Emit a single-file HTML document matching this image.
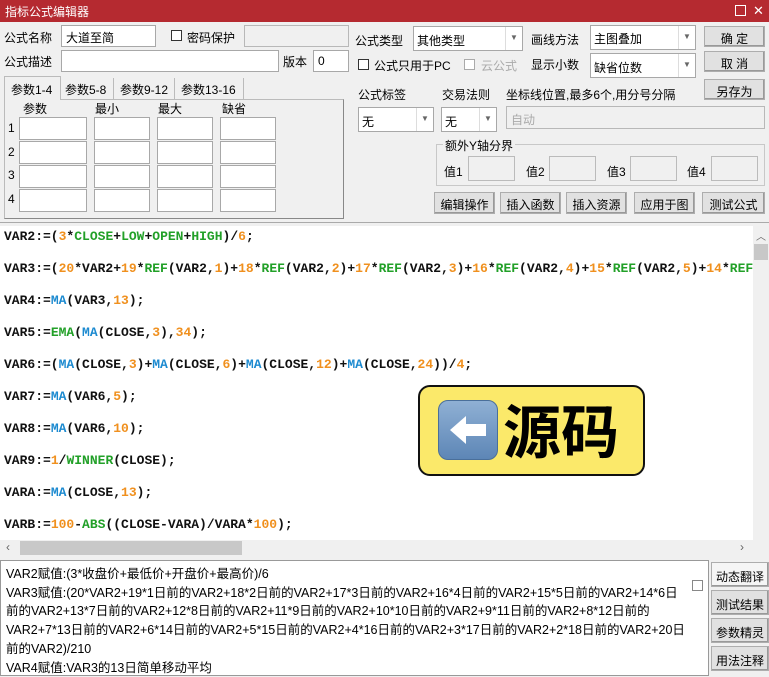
<!DOCTYPE html>
<html><head><meta charset="utf-8"><style>
*{margin:0;padding:0;box-sizing:border-box}
body{width:769px;height:676px;background:#f0f0f0;font-family:"Liberation Sans","Noto Sans CJK SC",sans-serif;font-size:12px;color:#000;position:relative;overflow:hidden}
.a{position:absolute;white-space:nowrap}
.in{position:absolute;background:#fff;border:1px solid #a8a8a8}
.dis{position:absolute;background:#f0f0f0;border:1px solid #b8b8b8}
.btn{position:absolute;background:#e1e1e1;border:1px solid #adadad;text-align:center;font-size:12px;box-shadow:inset -1px -1px 0 #999}
.cb{position:absolute;width:11px;height:11px;border:1px solid #333;background:#fff}
.dd{position:absolute;background:#fff;border:1px solid #a8a8a8}
.dd i{position:absolute;right:0;top:0;bottom:0;width:17px;border-left:1px solid #ddd;font-style:normal;font-size:8px;color:#666;text-align:center}
.code{position:absolute;left:0;top:226px;width:753px;height:314px;background:#fff;font-family:"Liberation Mono",monospace;font-weight:bold;font-size:13px;overflow:hidden}
.code div{position:absolute;left:4px;white-space:pre;color:#111}
.n{color:#f0901e}.g{color:#22a028}.b{color:#1c8ad0}
</style></head><body>
<div class="a" style="left:0;top:0;width:769px;height:22px;background:#b52a30;color:#fff;padding:3px 0 0 5px;font-size:12px">指标公式编辑器</div>
<div class="a" style="left:735px;top:5px;width:11px;height:11px;border:1px solid #fff"></div>
<div class="a" style="left:753px;top:3px;color:#fff;font-size:13px">✕</div>

<div class="a" style="left:4px;top:29px">公式名称</div>
<div class="in" style="left:61px;top:25px;width:95px;height:22px;padding:3px 4px">大道至简</div>
<div class="cb" style="left:171px;top:30px"></div>
<div class="a" style="left:187px;top:29px">密码保护</div>
<div class="dis" style="left:244px;top:25px;width:105px;height:22px"></div>
<div class="a" style="left:4px;top:53px">公式描述</div>
<div class="in" style="left:61px;top:50px;width:218px;height:22px"></div>
<div class="a" style="left:283px;top:53px">版本</div>
<div class="in" style="left:313px;top:50px;width:36px;height:22px;padding:3px 4px">0</div>

<div class="a" style="left:355px;top:32px">公式类型</div>
<div class="dd" style="left:413px;top:26px;width:110px;height:25px;padding:5px 3px">其他类型<i style="padding-top:6px">▼</i></div>
<div class="a" style="left:531px;top:31px">画线方法</div>
<div class="dd" style="left:590px;top:25px;width:106px;height:25px;padding:4px 3px">主图叠加<i style="padding-top:6px">▼</i></div>
<div class="btn" style="left:704px;top:26px;width:61px;height:21px;padding-top:3px">确 定</div>
<div class="cb" style="left:358px;top:59px"></div>
<div class="a" style="left:374px;top:57px">公式只用于PC</div>
<div class="cb" style="left:464px;top:59px;border-color:#aaa"></div>
<div class="a" style="left:481px;top:57px;color:#aaa">云公式</div>
<div class="a" style="left:531px;top:56px">显示小数</div>
<div class="dd" style="left:590px;top:53px;width:106px;height:25px;padding:5px 3px">缺省位数<i style="padding-top:6px">▼</i></div>
<div class="btn" style="left:704px;top:51px;width:61px;height:21px;padding-top:3px">取 消</div>
<div class="a" style="left:358px;top:86px">公式标签</div>
<div class="a" style="left:442px;top:86px">交易法则</div>
<div class="a" style="left:506px;top:86px">坐标线位置,最多6个,用分号分隔</div>
<div class="btn" style="left:704px;top:79px;width:61px;height:21px;padding-top:3px">另存为</div>
<div class="dd" style="left:358px;top:107px;width:76px;height:25px;padding:5px 3px">无<i style="padding-top:6px">▼</i></div>
<div class="dd" style="left:441px;top:107px;width:56px;height:25px;padding:5px 3px">无<i style="padding-top:6px">▼</i></div>
<div class="dis" style="left:506px;top:106px;width:259px;height:23px;padding:4px 4px;color:#aaa">自动</div>
<div class="a" style="left:436px;top:144px;width:329px;height:42px;border:1px solid #c8c8c8"></div>
<div class="a" style="left:443px;top:137px;background:#f0f0f0;padding:0 2px">额外Y轴分界</div>
<div class="a" style="left:444px;top:163px">值1</div><div class="in" style="left:468px;top:156px;width:47px;height:25px;background:#f0f0f0;border-color:#bbb"></div>
<div class="a" style="left:526px;top:163px">值2</div><div class="in" style="left:549px;top:156px;width:47px;height:25px;background:#f0f0f0;border-color:#bbb"></div>
<div class="a" style="left:607px;top:163px">值3</div><div class="in" style="left:630px;top:156px;width:47px;height:25px;background:#f0f0f0;border-color:#bbb"></div>
<div class="a" style="left:687px;top:163px">值4</div><div class="in" style="left:711px;top:156px;width:47px;height:25px;background:#f0f0f0;border-color:#bbb"></div>
<div class="btn" style="left:434px;top:192px;width:61px;height:22px;padding-top:3px">编辑操作</div>
<div class="btn" style="left:500px;top:192px;width:61px;height:22px;padding-top:3px">插入函数</div>
<div class="btn" style="left:566px;top:192px;width:61px;height:22px;padding-top:3px">插入资源</div>
<div class="btn" style="left:634px;top:192px;width:61px;height:22px;padding-top:3px">应用于图</div>
<div class="btn" style="left:702px;top:192px;width:63px;height:22px;padding-top:3px">测试公式</div>

<!-- tabs -->
<div class="a" style="left:4px;top:99px;width:340px;height:120px;border:1px solid #bbb;border-right-color:#888;border-bottom-color:#888"></div>
<div class="a" style="left:4px;top:76px;width:57px;height:24px;background:#f0f0f0;border:1px solid #bbb;border-bottom:none;padding:4px 0 0 6px">参数1-4</div>
<div class="a" style="left:62px;top:78px;width:52px;height:21px;border-right:1px solid #bbb;padding:3px 0 0 3px">参数5-8</div>
<div class="a" style="left:117px;top:78px;width:58px;height:21px;border-right:1px solid #bbb;padding:3px 0 0 3px">参数9-12</div>
<div class="a" style="left:178px;top:78px;width:66px;height:21px;border-right:1px solid #bbb;padding:3px 0 0 3px">参数13-16</div>
<div class="a" style="left:23px;top:100px">参数</div>
<div class="a" style="left:95px;top:100px">最小</div>
<div class="a" style="left:158px;top:100px">最大</div>
<div class="a" style="left:222px;top:100px">缺省</div>
<div class="a" style="left:8px;top:121px">1</div><div class="a" style="left:8px;top:145px">2</div><div class="a" style="left:8px;top:168px">3</div><div class="a" style="left:8px;top:192px">4</div>
<div class="in" style="left:19px;top:117px;width:68px;height:23px"></div><div class="in" style="left:94px;top:117px;width:56px;height:23px"></div><div class="in" style="left:157px;top:117px;width:56px;height:23px"></div><div class="in" style="left:220px;top:117px;width:56px;height:23px"></div>
<div class="in" style="left:19px;top:141px;width:68px;height:23px"></div><div class="in" style="left:94px;top:141px;width:56px;height:23px"></div><div class="in" style="left:157px;top:141px;width:56px;height:23px"></div><div class="in" style="left:220px;top:141px;width:56px;height:23px"></div>
<div class="in" style="left:19px;top:165px;width:68px;height:23px"></div><div class="in" style="left:94px;top:165px;width:56px;height:23px"></div><div class="in" style="left:157px;top:165px;width:56px;height:23px"></div><div class="in" style="left:220px;top:165px;width:56px;height:23px"></div>
<div class="in" style="left:19px;top:189px;width:68px;height:23px"></div><div class="in" style="left:94px;top:189px;width:56px;height:23px"></div><div class="in" style="left:157px;top:189px;width:56px;height:23px"></div><div class="in" style="left:220px;top:189px;width:56px;height:23px"></div>

<div class="a" style="left:0;top:222px;width:769px;height:1px;background:#aaa"></div>
<div class="code">
<div style="top:3px">VAR2:=(<span class="n">3</span>*<span class="g">CLOSE</span>+<span class="g">LOW</span>+<span class="g">OPEN</span>+<span class="g">HIGH</span>)/<span class="n">6</span>;</div>
<div style="top:35px">VAR3:=(<span class="n">20</span>*VAR2+<span class="n">19</span>*<span class="g">REF</span>(VAR2,<span class="n">1</span>)+<span class="n">18</span>*<span class="g">REF</span>(VAR2,<span class="n">2</span>)+<span class="n">17</span>*<span class="g">REF</span>(VAR2,<span class="n">3</span>)+<span class="n">16</span>*<span class="g">REF</span>(VAR2,<span class="n">4</span>)+<span class="n">15</span>*<span class="g">REF</span>(VAR2,<span class="n">5</span>)+<span class="n">14</span>*<span class="g">REF</span></div>
<div style="top:67px">VAR4:=<span class="b">MA</span>(VAR3,<span class="n">13</span>);</div>
<div style="top:99px">VAR5:=<span class="g">EMA</span>(<span class="b">MA</span>(CLOSE,<span class="n">3</span>),<span class="n">34</span>);</div>
<div style="top:131px">VAR6:=(<span class="b">MA</span>(CLOSE,<span class="n">3</span>)+<span class="b">MA</span>(CLOSE,<span class="n">6</span>)+<span class="b">MA</span>(CLOSE,<span class="n">12</span>)+<span class="b">MA</span>(CLOSE,<span class="n">24</span>))/<span class="n">4</span>;</div>
<div style="top:163px">VAR7:=<span class="b">MA</span>(VAR6,<span class="n">5</span>);</div>
<div style="top:195px">VAR8:=<span class="b">MA</span>(VAR6,<span class="n">10</span>);</div>
<div style="top:227px">VAR9:=<span class="n">1</span>/<span class="g">WINNER</span>(CLOSE);</div>
<div style="top:259px">VARA:=<span class="b">MA</span>(CLOSE,<span class="n">13</span>);</div>
<div style="top:291px">VARB:=<span class="n">100</span>-<span class="g">ABS</span>((CLOSE-VARA)/VARA*<span class="n">100</span>);</div>
</div>
<div class="a" style="left:753px;top:226px;width:16px;height:314px;background:#f0f0f0"></div>
<div class="a" style="left:756px;top:228px;font-size:10px;color:#666">︿</div>
<div class="a" style="left:754px;top:244px;width:14px;height:16px;background:#c8c8c8"></div>
<div class="a" style="left:0;top:540px;width:769px;height:17px;background:#f0f0f0"></div>
<div class="a" style="left:6px;top:540px;color:#666;font-size:12px">‹</div>
<div class="a" style="left:20px;top:541px;width:222px;height:14px;background:#c8c8c8"></div>
<div class="a" style="left:740px;top:540px;color:#666;font-size:12px">›</div>

<div class="a" style="left:418px;top:385px;width:227px;height:91px;background:#fbe96a;border:2px solid #111;border-radius:12px"></div>
<div class="a" style="left:438px;top:400px;width:60px;height:60px;border-radius:10px;background:linear-gradient(#8fb0d4,#5d86b6);border:1px solid #4a6f9a"></div>
<svg class="a" style="left:438px;top:400px" width="60" height="60"><path d="M12 30 L28 16 L28 24 L48 24 L48 36 L28 36 L28 44 Z" fill="#fff"/></svg>
<div class="a" style="left:503px;top:392px;font-size:58px;line-height:72px;font-family:'Noto Sans CJK SC',sans-serif;font-weight:bold">源码</div>

<div class="in" style="left:0;top:560px;width:709px;height:116px;border-color:#999"></div>
<div class="a" style="left:6px;top:565px;font-size:12.5px;line-height:18.7px;white-space:normal;width:700px">VAR2赋值:(3*收盘价+最低价+开盘价+最高价)/6<br>VAR3赋值:(20*VAR2+19*1日前的VAR2+18*2日前的VAR2+17*3日前的VAR2+16*4日前的VAR2+15*5日前的VAR2+14*6日<br>前的VAR2+13*7日前的VAR2+12*8日前的VAR2+11*9日前的VAR2+10*10日前的VAR2+9*11日前的VAR2+8*12日前的<br>VAR2+7*13日前的VAR2+6*14日前的VAR2+5*15日前的VAR2+4*16日前的VAR2+3*17日前的VAR2+2*18日前的VAR2+20日<br>前的VAR2)/210<br>VAR4赋值:VAR3的13日简单移动平均</div>
<div class="cb" style="left:692px;top:580px;border-color:#888"></div>
<div class="btn" style="left:711px;top:562px;width:58px;height:25px;padding-top:5px;background:#f5f5f5">动态翻译</div>
<div class="btn" style="left:711px;top:590px;width:58px;height:25px;padding-top:5px">测试结果</div>
<div class="btn" style="left:711px;top:618px;width:58px;height:25px;padding-top:5px">参数精灵</div>
<div class="btn" style="left:711px;top:646px;width:58px;height:25px;padding-top:5px">用法注释</div>
</body></html>
